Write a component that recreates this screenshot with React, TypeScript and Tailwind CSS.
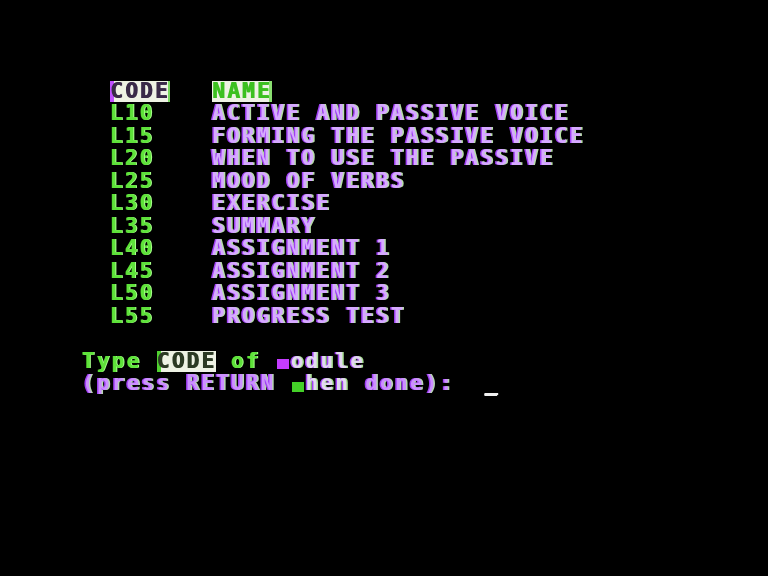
import React from "react";

const modules: [string, string][] = [
  ["L10", "ACTIVE AND PASSIVE VOICE"],
  ["L15", "FORMING THE PASSIVE VOICE"],
  ["L20", "WHEN TO USE THE PASSIVE"],
  ["L25", "MOOD OF VERBS"],
  ["L30", "EXERCISE"],
  ["L35", "SUMMARY"],
  ["L40", "ASSIGNMENT 1"],
  ["L45", "ASSIGNMENT 2"],
  ["L50", "ASSIGNMENT 3"],
  ["L55", "PROGRESS TEST"],
];

export default function App() {
  return (
    <div className="w-[768px] h-[576px] bg-black overflow-hidden">
      <div
        className="pt-[79.5px] pl-[82px] blur-[0.5px] font-bold text-[21px] tracking-[2.26px] whitespace-pre"
        style={{ fontFamily: '"DejaVu Sans Mono", "Liberation Mono", monospace' }}
      >
        <div className="ml-[28px]">
          <div className="flex h-[22.5px] items-start">
            <div className="flex w-[102px]">
              <span className="block mt-[1.5px] h-[21px] leading-[21px] bg-[#eef2e4] text-[#3a2a48] [text-shadow:1px_0_#3a2a48] shadow-[inset_4px_0_0_#c050ff,inset_-2px_0_0_#7ad860]">
                CODE
              </span>
            </div>
            <div className="flex">
              <span className="block mt-[1.5px] h-[21px] leading-[21px] bg-[#eef2e4] text-[#3cc020] [text-shadow:1px_0_#3cc020] shadow-[inset_-3px_0_0_#8adf70]">
                NAME
              </span>
            </div>
          </div>
          {modules.map(([code, name]) => (
            <div key={code} className="flex h-[22.5px] leading-[22.5px]">
              <div className="w-[102px] text-[#5ee23a] [text-shadow:1px_0_#a8ff8c,-0.5px_0_#4cc828]">
                {code}
              </div>
              <div className="text-[#d6aaff] [text-shadow:-1.5px_0_#a040f4,1.5px_0_#b8e0a8]">
                {name}
              </div>
            </div>
          ))}
        </div>
        <div className="h-[22.5px]" />
        <div className="flex h-[22.5px] items-start">
          <span className="leading-[22.5px] text-[#5ee23a] [text-shadow:1px_0_#a8ff8c,-0.5px_0_#4cc828]">Type </span>
          <span className="block mt-[1.5px] h-[21px] leading-[21px] bg-[#eef2e4] text-[#2c3a24] [text-shadow:1px_0_#2c3a24] shadow-[inset_4px_0_0_#50d030]">
            CODE
          </span>
          <span className="leading-[22.5px] text-[#5ee23a] [text-shadow:1px_0_#a8ff8c,-0.5px_0_#4cc828]"> of </span>
          <span className="block mt-[9.5px] w-[14.9px] h-[10px] leading-[10px] pl-[1px] pr-[2px] bg-clip-content bg-[#c43cff] text-transparent">m</span>
          <span className="leading-[22.5px] text-[#e2d8f0] [text-shadow:-1.5px_0_#a040f4,1.5px_0_#a8e090]">odule</span>
        </div>
        <div className="flex h-[22.5px] items-start">
          <span className="leading-[22.5px] text-[#cc90ff] [text-shadow:-1.5px_0_#a040f4,1.5px_0_#b8d8b0]">
            (press RETURN{" "}
          </span>
          <span className="block mt-[9.5px] w-[14.9px] h-[10px] leading-[10px] pl-[1px] pr-[2px] bg-clip-content bg-[#44d028] text-transparent">w</span>
          <span className="leading-[22.5px] text-[#e2d8f0] [text-shadow:-1.5px_0_#a040f4,1.5px_0_#a8e090]">hen</span>
          <span className="leading-[22.5px] text-[#cc90ff] [text-shadow:-1.5px_0_#a040f4,1.5px_0_#b8d8b0]">
            {" done):  "}
          </span>
          <span className="leading-[22.5px] text-[#f0f0f0] [text-shadow:0_1px_#f0f0f0,1px_0_#f0f0f0]">_</span>
        </div>
      </div>
    </div>
  );
}
